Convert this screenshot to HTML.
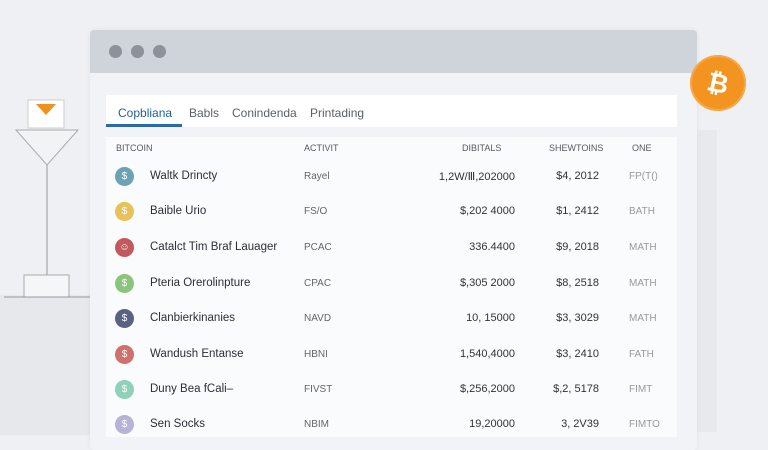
<!DOCTYPE html>
<html><head><style>
body{margin:0;width:768px;height:432px;overflow:hidden;background:#eef0f4;font-family:"Liberation Sans",sans-serif;position:relative}
.a{position:absolute}
.win{left:90px;top:30px;width:607px;height:420px;background:#f1f3f6;border-radius:4px;box-shadow:0 0 6px rgba(0,0,0,.05)}
.bar{left:90px;top:30px;width:607px;height:43px;background:#cfd3da;border-radius:4px 4px 0 0}
.dot{width:13px;height:13px;border-radius:50%;background:#8d9199;top:45px}
.tabs{left:106px;top:95px;width:571px;height:32px;background:#fff}
.tab{top:106px;font-size:12px;color:#5b6068}
.tbl{left:106px;top:137px;width:571px;height:300px;background:#fafbfc}
.h{top:143px;font-size:9px;color:#555a62}
.r{font-size:11.5px;color:#2b2f36}
.ic{width:19px;height:19px;border-radius:50%;left:115px;color:#fff;font-size:10px;text-align:center;line-height:19px}
.act{left:304px;font-size:10px;color:#666}
.d{right:253px;font-size:11px;color:#333;text-align:right}
.s{right:169px;font-size:11px;color:#333;text-align:right}
.o{left:629px;font-size:10px;color:#999}
</style></head><body>
<div class="a" style="left:0;top:295px;width:90px;height:140px;background:#e6e8ec"></div>
<div class="a" style="left:697px;top:130px;width:20px;height:302px;background:#e7e9ed"></div>
<svg class="a" style="left:0;top:90px" width="100" height="210">
<rect x="28" y="10" width="36" height="28" fill="#fff" stroke="#ccc"/>
<polygon points="36,14 56,14 46,25" fill="#f0901e"/>
<polygon points="16,40 78,40 47,75" fill="#f2f3f5" stroke="#aaa"/>
<line x1="47" y1="75" x2="47" y2="185" stroke="#999"/>
<rect x="24" y="185" width="45" height="22" fill="#f5f6f8" stroke="#aaa"/>
<line x1="4" y1="207" x2="90" y2="207" stroke="#999"/>
</svg>
<div class="a win"></div>
<div class="a bar"></div>
<div class="a dot" style="left:109px"></div><div class="a dot" style="left:131px"></div><div class="a dot" style="left:153px"></div>
<div class="a tabs"></div>
<div class="a" style="left:106px;top:124px;width:76px;height:3px;background:#2a6aa6"></div>
<div class="a tab" style="left:118px;color:#1f5e96">Copbliana</div>
<div class="a tab" style="left:189px">Babls</div>
<div class="a tab" style="left:232px">Conindenda</div>
<div class="a tab" style="left:310px">Printading</div>
<div class="a tbl"></div>
<div class="a h" style="left:116px">BITCOIN</div>
<div class="a h" style="left:304px">ACTIVIT</div>
<div class="a h" style="left:462px">DIBITALS</div>
<div class="a h" style="left:549px">SHEWTOINS</div>
<div class="a h" style="left:632px">ONE</div>
<div class="a" style="left:690px;top:55px;width:56px;height:56px;border-radius:50%;background:#f39420;box-shadow:0 0 0 2px #f6a84a inset;color:#fff;font-size:26px;font-weight:bold;text-align:center;line-height:56px;transform:rotate(12deg)">₿</div>
<div class="a ic" style="top:167px;background:#6ba3b5">$</div><div class="a r" style="left:150px;top:170px">Waltk Drincty</div><div class="a act" style="top:171px">Rayel</div><div class="a d" style="top:170px">1,2W/Ⅲ,202000</div><div class="a s" style="top:170px">$4, 2012</div><div class="a o" style="top:171px">FP(T()</div>
<div class="a ic" style="top:202px;background:#e8c158">$</div><div class="a r" style="left:150px;top:205px">Baible Urio</div><div class="a act" style="top:206px">FS/O</div><div class="a d" style="top:205px">$,202 4000</div><div class="a s" style="top:205px">$1, 2412</div><div class="a o" style="top:206px">BATH</div>
<div class="a ic" style="top:238px;background:#c05a5f">☺</div><div class="a r" style="left:150px;top:241px">Catalct Tim Braf Lauager</div><div class="a act" style="top:242px">PCAC</div><div class="a d" style="top:241px">336.4400</div><div class="a s" style="top:241px">$9, 2018</div><div class="a o" style="top:242px">MATH</div>
<div class="a ic" style="top:274px;background:#8cc47e">$</div><div class="a r" style="left:150px;top:277px">Pteria Orerolinpture</div><div class="a act" style="top:278px">CPAC</div><div class="a d" style="top:277px">$,305 2000</div><div class="a s" style="top:277px">$8, 2518</div><div class="a o" style="top:278px">MATH</div>
<div class="a ic" style="top:309px;background:#5b6183">$</div><div class="a r" style="left:150px;top:312px">Clanbierkinanies</div><div class="a act" style="top:313px">NAVD</div><div class="a d" style="top:312px">10, 15000</div><div class="a s" style="top:312px">$3, 3029</div><div class="a o" style="top:313px">MATH</div>
<div class="a ic" style="top:345px;background:#d0706e">$</div><div class="a r" style="left:150px;top:348px">Wandush Entanse</div><div class="a act" style="top:349px">HBNI</div><div class="a d" style="top:348px">1,540,4000</div><div class="a s" style="top:348px">$3, 2410</div><div class="a o" style="top:349px">FATH</div>
<div class="a ic" style="top:380px;background:#8ed0b8">$</div><div class="a r" style="left:150px;top:383px">Duny Bea fCali–</div><div class="a act" style="top:384px">FIVST</div><div class="a d" style="top:383px">$,256,2000</div><div class="a s" style="top:383px">$,2, 5178</div><div class="a o" style="top:384px">FIMT</div>
<div class="a ic" style="top:415px;background:#b6b3d8">$</div><div class="a r" style="left:150px;top:418px">Sen Socks</div><div class="a act" style="top:419px">NBIM</div><div class="a d" style="top:418px">19,20000</div><div class="a s" style="top:418px">3, 2V39</div><div class="a o" style="top:419px">FIMTO</div>
</body></html>
